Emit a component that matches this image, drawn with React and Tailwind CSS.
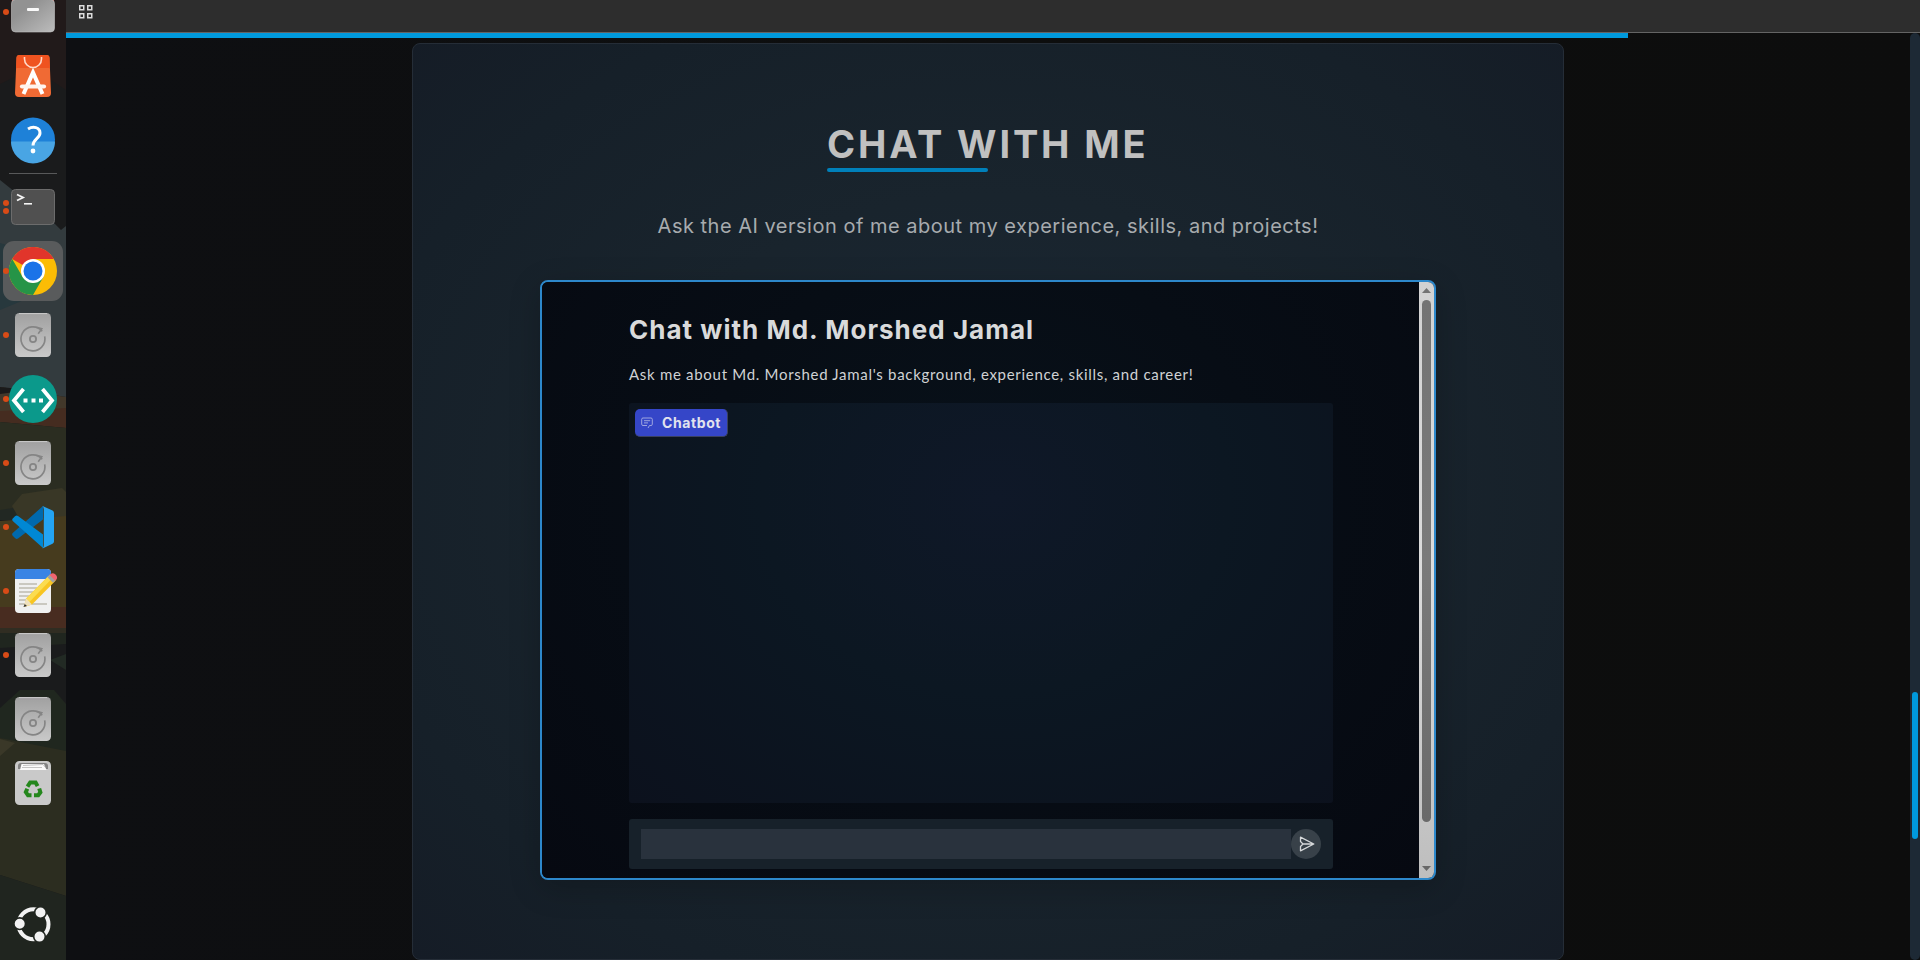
const Dot = ({ className = '' }) => (
  <span className={`block h-[6px] w-[6px] rounded-full bg-[#d84b17] ${className}`} />
);

const DockItem = ({ dots = 0, active = false, children }) => (
  <div className="relative flex h-16 w-[66px] shrink-0 items-center justify-center">
    {active && <span className="absolute left-[3px] top-[2px] h-[60px] w-[60px] rounded-[11px] bg-[#595b5c]" />}
    {dots > 0 && (
      <span className="absolute left-[3px] top-0 flex h-16 flex-col justify-center gap-[2px]">
        {Array.from({ length: dots }, (_, i) => (
          <Dot key={i} />
        ))}
      </span>
    )}
    <svg viewBox="0 0 48 48" className="relative h-12 w-12">
      {children}
    </svg>
  </div>
);

const Disk = () => (
  <>
    <rect x="6" y="2" width="36" height="44" rx="4.500" fill="url(#disk)" />
    <path d="M10 2.600h28" stroke="#d4d4d4" strokeWidth="0.800" />
    <path d="M33.200 20.200A12 12 0 1 0 35.700 25.400" fill="none" stroke="#858585" strokeWidth="1.700" />
    <path d="M27.500 16.200l5.300 1.600-3.600 5" fill="none" stroke="#858585" strokeWidth="1.600" />
    <circle cx="24" cy="28" r="3.100" fill="none" stroke="#858585" strokeWidth="1.800" />
  </>
);

const Wallpaper = () => (
  <svg viewBox="0 0 66 960" className="absolute inset-0 h-[960px] w-[66px]" preserveAspectRatio="none">
    <rect width="66" height="960" fill="#1a1b1c" />
    <path d="M0 0H66V90L45 76L25 72L0 84Z" fill="#211a1a" />
    <path d="M0 180L55 224L61 230L66 226V397L0 387Z" fill="#333b3e" />
    <path d="M0 243L24 250V300L0 310Z" fill="#27383d" />
    <path d="M0 387L66 397V410L0 420Z" fill="#42382a" />
    <path d="M0 387L30 390L0 394Z" fill="#1a1a1a" />
    <path d="M0 411L66 408V428L0 422Z" fill="#452c20" />
    <path d="M0 422L66 428V515H0Z" fill="#2b2d21" />
    <path d="M0 510L66 500V520H0Z" fill="#222823" />
    <path d="M12 506L22 494L62 488L66 492V520H20Z" fill="#393726" />
    <path d="M0 521L66 516V610H0Z" fill="#463b1e" />
    <path d="M0 607H66V629H0Z" fill="#482c20" />
    <path d="M0 628H66V633H0Z" fill="#302d22" />
    <path d="M0 633H66V644L0 648Z" fill="#20261f" />
    <path d="M50 660L66 654V670Z" fill="#222a24" />
    <path d="M0 708L20 690H54L66 704V760L0 738Z" fill="#20271f" />
    <path d="M0 738L66 751V896L0 875Z" fill="#2c2d20" />
    <path d="M0 739L15 743L0 756Z" fill="#3a3828" />
    <path d="M0 875L66 896V960H0Z" fill="#20251f" />
  </svg>
);

const Dock = () => (
  <aside className="relative h-[960px] w-[66px] shrink-0 overflow-hidden">
    <Wallpaper />
    <div className="relative flex h-[960px] flex-col">
      <div className="-mt-5">
        <DockItem dots={1}>
          <defs>
            <linearGradient id="disk" x1="0" y1="0" x2="0" y2="1">
              <stop offset="0" stopColor="#a0a0a0" />
              <stop offset="1" stopColor="#c9c9c9" />
            </linearGradient>
            <linearGradient id="files" x1="0" y1="0" x2="1" y2="1">
              <stop offset="0.3" stopColor="#929292" />
              <stop offset="1" stopColor="#bcbcbc" />
            </linearGradient>
          </defs>
          <rect x="3" y="7" width="42" height="12" rx="3" fill="#d2342a" />
          <rect x="2.500" y="11.500" width="43" height="32.500" rx="4" fill="url(#files)" stroke="#c2c2c2" strokeWidth="0.600" />
          <rect x="18" y="20" width="12" height="3" rx="1" fill="#fafafa" />
        </DockItem>
      </div>
      <DockItem>
        <path d="M10.500 3h27a3 3 0 0 1 3 3l1.500 35a4 4 0 0 1-4 4h-28a4 4 0 0 1-4-4L7.500 6a3 3 0 0 1 3-3z" fill="#f06a34" />
        <path d="M10.500 3h27a3 3 0 0 1 3 3l.4 10H7.100L7.500 6a3 3 0 0 1 3-3z" fill="#ef5320" />
        <path d="M15.500 5v2a8.500 8.500 0 0 0 17 0V5" fill="none" stroke="#ffd9c8" strokeWidth="1.600" />
        <path d="M14.500 42L24 20.500L33.500 42" fill="none" stroke="#fff" strokeWidth="4" />
        <path d="M13 34.500h22" stroke="#fff4ee" strokeWidth="4.200" strokeLinecap="round" />
      </DockItem>
      <DockItem>
        <g transform="translate(0 -0.500)">
          <circle cx="24" cy="24" r="22" fill="#1e81d8" />
          <path d="M2 26H46A22 22 0 0 1 2 26Z" fill="#49a5e4" />
          <path d="M19 13.500C24 10.500 31 11.500 31 17.500C31 23 24 23.500 24 30" fill="none" stroke="#fff" strokeWidth="3" />
          <circle cx="24" cy="35.500" r="2.400" fill="#fff" />
        </g>
      </DockItem>
      <div className="mx-[9px] h-[3px] shrink-0 py-px">
        <div className="h-px bg-[#58595a]" />
      </div>
      <DockItem dots={2}>
        <rect x="2.500" y="6.500" width="43" height="35" rx="4" fill="#505050" stroke="#6c6c6c" strokeWidth="1" />
        <path d="M8 11.500L14 14.500L8 17.500" fill="none" stroke="#f4f4f4" strokeWidth="1.900" />
        <path d="M15 20.800h8" stroke="#f4f4f4" strokeWidth="1.600" />
      </DockItem>
      <DockItem dots={1} active>
        <circle cx="24" cy="24" r="24" fill="#fbbc05" />
        <path d="M24 24L3.200 12A24 24 0 0 1 44.800 12H24Z" fill="#e1352b" />
        <path d="M3.200 12L13.600 30L24 36L34.400 30L24 48A24 24 0 0 1 3.200 12Z" fill="#269447" />
        <circle cx="24" cy="24" r="12" fill="#fff" />
        <circle cx="24" cy="24" r="9.500" fill="#1a73e8" />
      </DockItem>
      <DockItem dots={1}>
        <Disk />
      </DockItem>
      <DockItem dots={1}>
        <circle cx="24" cy="24" r="24" fill="#0b998b" />
        <path d="M14.500 14L5 25.500L14.500 37M33.500 14L43 25.500L33.500 37" fill="none" stroke="#fff" strokeWidth="3.800" />
        <path d="M14.500 23.500h4v4h-4zM22.500 23.500h4v4h-4zM30 23.500h4v4h-4z" fill="#fff" />
      </DockItem>
      <DockItem dots={1}>
        <Disk />
      </DockItem>
      <DockItem dots={1}>
        <path d="M34 3v13.500L9 35.500Q7.500 36.500 6 35L3.500 32.500Q2.500 31 4 29.800Z" fill="#0069ad" />
        <path d="M34 45V31.500L9 13Q7.500 12 6 13.300L3.500 15.700Q2.500 17 4 18.300Z" fill="#0088d4" />
        <path d="M33.500 3L43.500 7.500Q45 8.200 45 10V38.500Q45 40 43.500 40.800L33.500 45.500Q34.800 44.500 34.800 42V6.500Q34.800 4 33.500 3Z" fill="#24a4f2" />
      </DockItem>
      <DockItem dots={1}>
        <rect x="6" y="2" width="36" height="44" rx="4" fill="#f0f0f0" />
        <path d="M6 12V6a4 4 0 0 1 4-4h28a4 4 0 0 1 4 4v6z" fill="#3984e4" />
        <path d="M10 17h18M10 21h18M10 25h15M10 29h12M10 33h9M10 37h28" stroke="#bdbab0" strokeWidth="1.700" />
        <path d="M41 7.500L46.800 13.500L23 37.500L15 40L17.200 31.500Z" fill="#f8c522" />
        <path d="M39.500 9L42.500 12L19 36.500L17.200 31.500Z" fill="#fbdc50" />
        <path d="M17.200 31.500L23 37.500L14.500 40Z" fill="#efe0bd" />
        <path d="M15.700 37L18 39L14.500 40Z" fill="#333" />
        <path d="M38.500 10.200L41 7.700L46.500 13.300L44 15.800Z" fill="#a0a0a0" />
        <path d="M40.500 8L42 6.700Q44 5.500 46.500 7.500Q49 10 47.500 12.300L46 13.500Z" fill="#ef6570" />
      </DockItem>
      <DockItem dots={1}>
        <Disk />
      </DockItem>
      <DockItem>
        <Disk />
      </DockItem>
      <DockItem>
        <rect x="6" y="2" width="36" height="44" rx="4.500" fill="#c9c9c9" />
        <path d="M9 10V7a3 3 0 0 1 3-3h24a3 3 0 0 1 3 3v3z" fill="#828282" />
        <path d="M11 11L12.500 5H35l2.500 6z" fill="#fafafa" />
        <path d="M14 6.500L34 5.500L37 9M13 8.500h20" fill="none" stroke="#aaa" strokeWidth="0.700" />
        <g transform="translate(24 30.500)" fill="none" stroke="#24871c" strokeWidth="4">
          <path d="M-5.500 -2.800L-2.800 -7H2.600L4.600 -3.400" />
          <path d="M6.200 -1L7.400 2.800L5.200 5.800H1" />
          <path d="M-1.500 5.800H-5L-7.200 2.600L-5.700 -.8" />
        </g>
      </DockItem>
      <div className="mb-1 mt-auto">
        <DockItem>
          <circle cx="24.500" cy="24.300" r="15" fill="none" stroke="#f2f2f2" strokeWidth="4" />
          <g fill="#f2f2f2" stroke="#20251f" strokeWidth="1.600">
            <circle cx="10.700" cy="23.700" r="5.800" />
            <circle cx="31.500" cy="12.500" r="5.800" />
            <circle cx="30.500" cy="36.600" r="5.800" />
          </g>
        </DockItem>
      </div>
    </div>
  </aside>
);

const ChatLabel = () => (
  <div className="flex h-7 w-[93px] items-center rounded-[5px] border-b border-r border-[#3a4160] bg-[#3546c8] pl-[6px]">
    <svg viewBox="0 0 12 12" className="h-3 w-3" fill="none" stroke="#a9b0e2" strokeWidth="0.900">
      <path d="M6 8.500H2a1.300 1.300 0 0 1-1.300-1.300V2.300A1.300 1.300 0 0 1 2 1h8a1.300 1.300 0 0 1 1.300 1.300v4.900A1.300 1.300 0 0 1 10 8.500H8.500L7 11" />
      <path d="M3 3.700h6.200M3 5.900h4" />
    </svg>
    <span className="ml-[9px] text-[14px] font-bold leading-[26px] tracking-[0.600px] text-[#e2e3ee]">Chatbot</span>
  </div>
);

const ChatScrollbar = () => (
  <div className="flex w-[15px] shrink-0 flex-col items-center bg-linear-to-b from-[#d2d2d2] via-[#dcdcdc] to-[#bebebe]">
    <svg viewBox="0 0 9 5" className="mt-[6px] h-[5px] w-[9px]">
      <path d="M0 5L4.500 0L9 5Z" fill="#737373" />
    </svg>
    <div className="mt-[7px] h-[522px] w-[9px] rounded-full bg-linear-to-b from-[#747474] via-[#7a7a7a] to-[#6a6a6a]" />
    <svg viewBox="0 0 9 5" className="mt-[44px] h-[5px] w-[9px]">
      <path d="M0 0L4.500 5L9 0Z" fill="#686868" />
    </svg>
  </div>
);

const ChatFrame = () => (
  <div className="mt-[38px] flex h-[600px] w-[896px] shrink-0 overflow-hidden rounded-lg border-2 border-[#2d88cb] bg-[#060b13] shadow-[0_8px_32px_rgba(0,0,0,0.2)]">
    <div className="flex w-[877px] min-w-0 flex-col bg-[radial-gradient(ellipse_at_50%_36%,#08111a_0%,#070d15_45%,#060911_100%)] pl-[87px] font-['Inter',sans-serif]">
      <h2 className="mt-[28px] whitespace-nowrap text-[26px] font-bold leading-10 tracking-[1.020px] text-[#d9dadb]">
        Chat with Md. Morshed Jamal
      </h2>
      <p className="mt-[14px] whitespace-nowrap font-['Lato',sans-serif] text-[15px] leading-5 tracking-[0.700px] text-[#d0d2d4]">
        Ask me about Md. Morshed Jamal's background, experience, skills, and career!
      </p>
      <div className="mt-[19px] h-[400px] w-[704px] rounded-[3px] bg-[radial-gradient(ellipse_at_52%_24%,#0f1828_0%,#0c1722_45%,#0c111d_100%)] p-[6px]">
        <ChatLabel />
      </div>
      <div className="mt-4 flex h-[50px] w-[704px] items-center rounded-[3px] bg-[#17212a] px-3">
        <div className="h-[30px] flex-1 bg-[#29323d]" />
        <button className="flex h-[30px] w-[30px] items-center justify-center rounded-full bg-[#384149]">
          <svg viewBox="0 0 16 16" className="ml-px h-4 w-4" fill="none" stroke="#d6d8da" strokeWidth="1.300" strokeLinejoin="round">
            <path d="M1.500 1.200L14.800 8L1.500 14.800V10.500L4 8L1.500 5.500ZM4 8H14" />
          </svg>
        </button>
      </div>
    </div>
    <ChatScrollbar />
  </div>
);

export default function App() {
  return (
    <div className="flex h-[960px] w-[1920px] overflow-hidden bg-[#0d0e0f]">
      <Dock />
      <div className="flex w-[1854px] flex-col">
        <header className="h-[33px] shrink-0 border-b border-[#646464] bg-[#2d2d2d] pl-[13px] pt-[5px]">
          <svg viewBox="0 0 14 14" className="h-[14px] w-[14px]" fill="none" stroke="#dcdcdc" strokeWidth="1.500">
            <path d="M.75 .75h4v4h-4zM8.750 .75h4v4h-4zM.75 8.750h4v4h-4zM8.750 8.750h4v4h-4z" />
          </svg>
        </header>
        <div className="flex h-[927px]">
          <main className="flex w-[1844px] flex-col bg-linear-to-r from-[#0e0f12] via-[#0d0e0e] to-[#0d0d0d]">
            <div className="h-[5px] w-[1562px] shrink-0 bg-[#009add]" />
            <section className="ml-[346px] mt-[5px] flex h-[917px] w-[1152px] shrink-0 flex-col items-center rounded-lg border border-[#252d37] bg-[radial-gradient(ellipse_at_50%_49%,#1a2836_0%,#19242d_45%,#162029_78%,#151c26_100%)]">
              <h1 className="mt-[74px] flex w-[322px] flex-col">
                <span className="whitespace-nowrap font-['Inter',sans-serif] text-[38px] font-bold leading-[52px] tracking-[2.850px] text-[#c0c0c0]">
                  CHAT WITH ME
                </span>
                <span className="-mt-[2px] h-1 w-[161px] rounded-[2px] bg-[#0080ba]" />
              </h1>
              <p className="mt-[38px] whitespace-nowrap font-['Inter',sans-serif] text-[20px] leading-8 tracking-[0.500px] text-[#a7abae]">
                Ask the AI version of me about my experience, skills, and projects!
              </p>
              <ChatFrame />
            </section>
          </main>
          <div className="flex w-[10px] justify-center rounded-[5px] bg-[#1d2935]">
            <div className="mt-[659px] h-[147px] w-[6px] rounded-[3px] bg-[#0099dd]" />
          </div>
        </div>
      </div>
    </div>
  );
}
